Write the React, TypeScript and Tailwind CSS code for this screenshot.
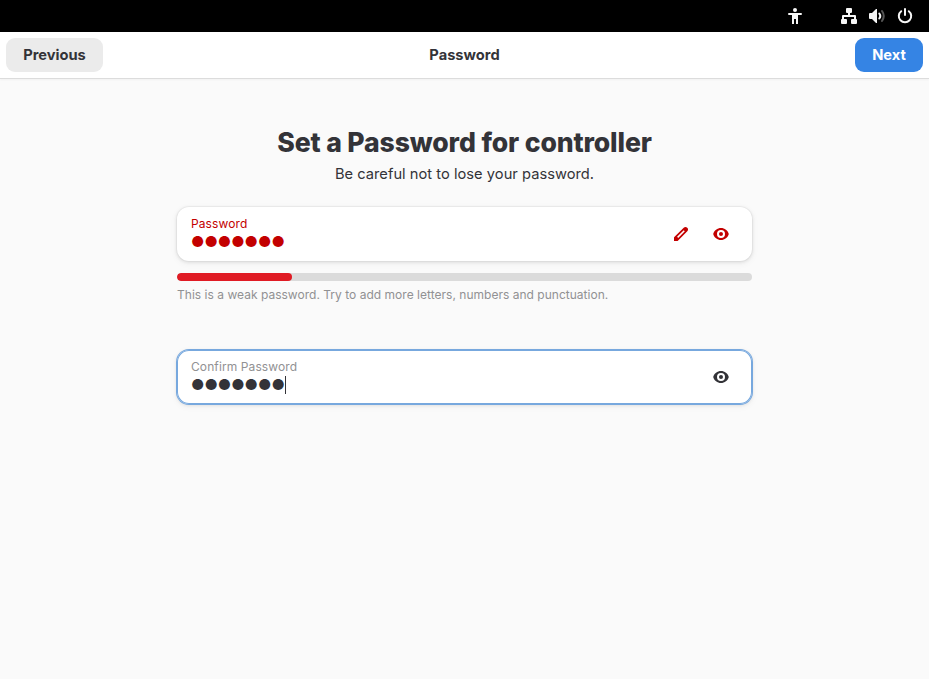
import type { ReactNode } from 'react';

function EyeIcon() {
  return (
    <svg width="16" height="16" viewBox="0 0 16 16" fill="currentColor">
      <path
        fillRule="evenodd"
        d="M8 2C4.400 2 1.100 4.500.2 8c.9 3.500 4.200 6 7.800 6s6.900-2.500 7.800-6C14.900 4.500 11.600 2 8 2Zm0 2a4 4 0 1 1 0 8 4 4 0 0 1 0-8Zm0 2a2 2 0 1 0 0 4 2 2 0 0 0 0-4Z"
      />
    </svg>
  );
}

function PencilIcon() {
  return (
    <svg width="16" height="16" viewBox="0 0 16 16" fill="currentColor">
      <path
        fillRule="evenodd"
        d="M12.500 1c-.7 0-1.300.25-1.800.75L1.300 11.100c-.2.200-.3.400-.3.700V15h3.200c.3 0 .5-.1.700-.3l9.400-9.400A2.500 2.500 0 0 0 12.500 1ZM10.700 4.200 4.100 10.800l1.100 1.100 6.600-6.600Z"
      />
    </svg>
  );
}

function AccessibilityIcon() {
  return (
    <svg width="16" height="16" viewBox="0 0 16 16" fill="currentColor">
      <circle cx="8" cy="2" r="2" />
      <path d="M2 5h12q1 0 1 1t-1 1h-3v9H9v-5H7v5H5V7H2Q1 7 1 6t1-1Z" />
    </svg>
  );
}

function NetworkIcon() {
  return (
    <svg width="16" height="16" viewBox="0 0 16 16" fill="currentColor">
      <path d="M6 0h4q1 0 1 1v3q0 1-1 1H9v2h5q1 0 1 1v3q1 0 1 1v3q0 1-1 1h-4q-1 0-1-1v-3q0-1 1-1h2V9H3v2h2q1 0 1 1v3q0 1-1 1H1q-1 0-1-1v-3q0-1 1-1V8q0-1 1-1h5V5H6Q5 5 5 4V1q0-1 1-1Z" />
    </svg>
  );
}

function VolumeIcon() {
  return (
    <svg width="16" height="16" viewBox="0 0 16 16" fill="none" stroke="currentColor" strokeWidth="2" strokeLinecap="round">
      <path fill="currentColor" stroke="none" d="M7 1 3 5H1Q0 5 0 6v4q0 1 1 1h2l4 4h1V1Z" />
      <path d="M10.300 5.500q2 2.500 0 5" />
      <path d="M13 3q3.500 5 0 10" opacity=".35" />
    </svg>
  );
}

function PowerIcon() {
  return (
    <svg width="16" height="16" viewBox="0 0 16 16" fill="none" stroke="currentColor" strokeWidth="2" strokeLinecap="round">
      <path d="M8 1v6M4.200 3.200a6.200 6.200 0 1 0 7.600 0" />
    </svg>
  );
}

function PasswordRow({ label, labelClass, rowClass, caret, children }: {
  label: string;
  labelClass: string;
  rowClass: string;
  caret?: boolean;
  children: ReactNode;
}) {
  return (
    <div className={`flex h-[54px] items-center justify-between rounded-xl bg-white pl-[14px] pr-[23px] ${rowClass}`}>
      <div className="flex flex-col">
        <span className={`text-[12px] leading-[16px] tracking-[0.1px] ${labelClass}`}>{label}</span>
        <div className="flex h-5 items-center">
          <span className="pt-px text-[14.67px] leading-[19px]">●●●●●●●</span>
          {caret && <span className="h-[18px] w-px bg-[#333338]" />}
        </div>
      </div>
      <div className="flex gap-6">{children}</div>
    </div>
  );
}

export default function App() {
  return (
    <div className="flex h-[679px] w-[929px] flex-col bg-[#fafafa] font-['Inter',sans-serif] text-[#333338]">
      <div className="flex h-8 items-center justify-end bg-black pr-4 text-[#f6f6f6]">
        <div className="mr-[38px]"><AccessibilityIcon /></div>
        <div className="flex gap-3">
          <NetworkIcon />
          <VolumeIcon />
          <PowerIcon />
        </div>
      </div>
      <header className="grid h-[47px] grid-cols-[1fr_auto_1fr] items-center border-b border-[#dcdcdc] bg-white px-[6px] text-[14.67px] font-bold shadow-[0_1px_2px_rgba(0,0,0,0.04)]">
        <button className="h-[34px] w-[97px] justify-self-start rounded-[9px] bg-[#ebebeb]">Previous</button>
        <span>Password</span>
        <button className="h-[34px] w-[68px] justify-self-end rounded-[9px] bg-[#3584e4] text-white">Next</button>
      </header>
      <main className="mx-auto flex w-[575px] flex-col pt-[45px]">
        <h1 className="text-center text-[26.6px] font-extrabold leading-[36px] tracking-[-0.14px]">Set a Password for controller</h1>
        <p className="mt-1 text-center text-[14.67px] leading-5 tracking-[0.03px]">Be careful not to lose your password.</p>
        <div className="mt-[23px]">
          <PasswordRow label="Password" labelClass="" rowClass="text-[#c30000] shadow-[0_0_0_1px_rgba(0,0,0,0.03),0_1px_3px_1px_rgba(0,0,0,0.07),0_2px_6px_2px_rgba(0,0,0,0.03)]">
            <PencilIcon />
            <EyeIcon />
          </PasswordRow>
        </div>
        <div className="mt-3 h-2 overflow-hidden rounded-full bg-[#dbdbdb]">
          <div className="h-2 w-[115px] rounded-full bg-[#e01b24]" />
        </div>
        <p className="mt-[6px] text-[12px] leading-4 tracking-[0.02px] text-[#919193]">
          This is a weak password. Try to add more letters, numbers and punctuation.
        </p>
        <div className="mt-[47px]">
          <PasswordRow caret label="Confirm Password" labelClass="text-[#919193]" rowClass="shadow-[0_0_0_1px_#77a8de,inset_0_0_0_1px_#77a8de,0_1px_3px_1px_rgba(0,0,0,0.07),0_2px_6px_2px_rgba(0,0,0,0.03)]">
            <EyeIcon />
          </PasswordRow>
        </div>
      </main>
    </div>
  );
}
